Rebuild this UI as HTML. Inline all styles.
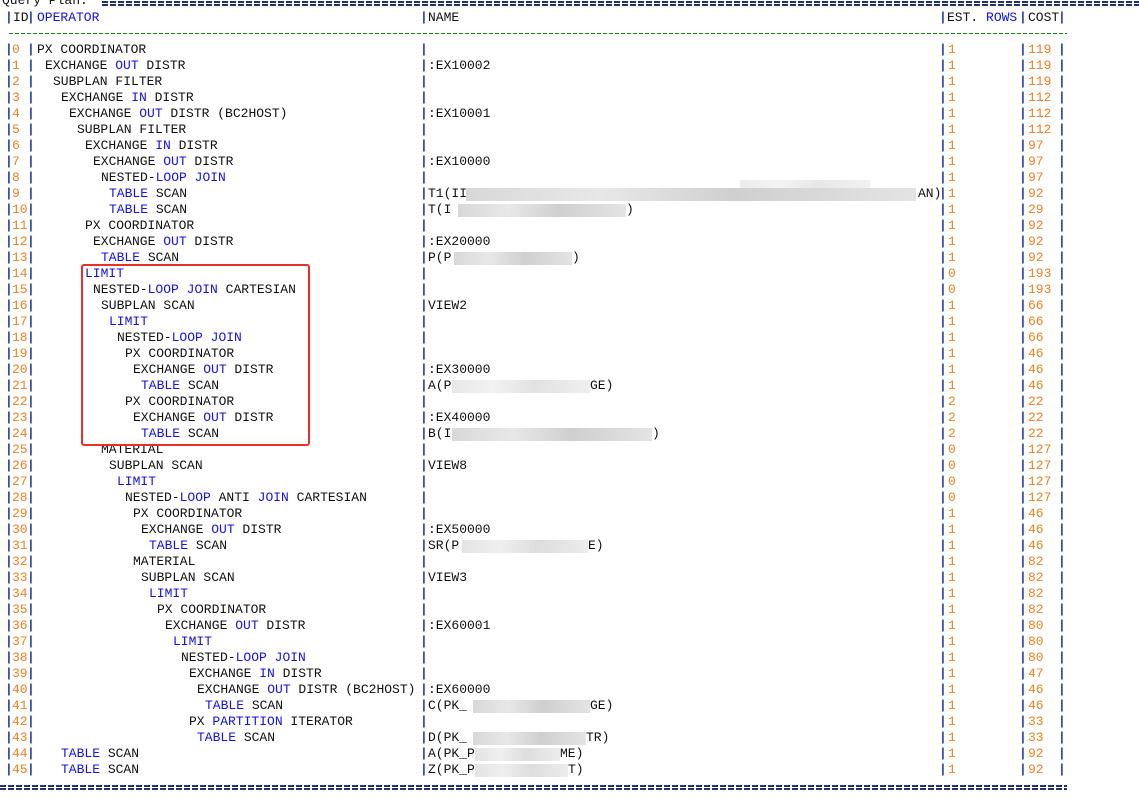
<!DOCTYPE html>
<html><head><meta charset="utf-8"><style>
body{margin:0;width:1139px;height:798px;background:#fff;position:relative;overflow:hidden;font-family:"Liberation Mono",monospace;font-size:13px;color:#111}
.r{position:absolute;left:0;width:1139px;height:16px;line-height:16px}
.r span{position:absolute;white-space:pre;top:0}
.b{color:#2848a8;font-weight:bold}
.o{color:#f08020}
.k{color:#1010f0}
.bl{position:absolute;height:13px;background:linear-gradient(90deg,#d8d8d8,#e8e8e8 30%,#cfcfcf 60%,#e4e4e4);}
.eq{position:absolute;height:5px;background:repeating-linear-gradient(90deg,#203070 0 6px,transparent 6px 8px);border:0}
.eq:after{content:"";position:absolute;left:0;right:0;top:2px;height:1px;background:#fff}
</style></head><body>
<div class="r" style="top:-7px"><span style="left:2px">Query Plan:</span></div>
<div class="eq" style="left:102px;top:1px;width:1037px"></div>
<div class="r" style="top:10px"><span class="b" style="left:5px">|</span><span style="left:13px">ID</span><span class="b" style="left:27px">|</span><span class="k" style="left:37px">OPERATOR</span><span class="b" style="left:420px">|</span><span style="left:428px">NAME</span><span class="b" style="left:939px">|</span><span style="left:947px">EST. <span class="k" style="position:static">ROWS</span></span><span class="b" style="left:1019px">|</span><span style="left:1028px">COST</span><span class="b" style="left:1058px">|</span></div>
<div style="position:absolute;left:9px;top:33px;width:1058px;height:1px;background:repeating-linear-gradient(90deg,#108a10 0 4px,transparent 4px 6px)"></div>

<div class="r" style="top:42px"><span class="b" style="left:5px">|</span><span class="o" style="left:12px">0</span><span class="b" style="left:27px">|</span><span style="left:37px">PX COORDINATOR</span><span class="b" style="left:420px">|</span><span class="b" style="left:939px">|</span><span class="o" style="left:948px">1</span><span class="b" style="left:1019px">|</span><span class="o" style="left:1028px">119</span><span class="b" style="left:1058px">|</span></div>
<div class="r" style="top:58px"><span class="b" style="left:5px">|</span><span class="o" style="left:12px">1</span><span class="b" style="left:27px">|</span><span style="left:45px">EXCHANGE <b class="k" style="font-weight:normal">OUT</b> DISTR</span><span class="b" style="left:420px">|</span><span style="left:428px">:EX10002</span><span class="b" style="left:939px">|</span><span class="o" style="left:948px">1</span><span class="b" style="left:1019px">|</span><span class="o" style="left:1028px">119</span><span class="b" style="left:1058px">|</span></div>
<div class="r" style="top:74px"><span class="b" style="left:5px">|</span><span class="o" style="left:12px">2</span><span class="b" style="left:27px">|</span><span style="left:53px">SUBPLAN FILTER</span><span class="b" style="left:420px">|</span><span class="b" style="left:939px">|</span><span class="o" style="left:948px">1</span><span class="b" style="left:1019px">|</span><span class="o" style="left:1028px">119</span><span class="b" style="left:1058px">|</span></div>
<div class="r" style="top:90px"><span class="b" style="left:5px">|</span><span class="o" style="left:12px">3</span><span class="b" style="left:27px">|</span><span style="left:61px">EXCHANGE <b class="k" style="font-weight:normal">IN</b> DISTR</span><span class="b" style="left:420px">|</span><span class="b" style="left:939px">|</span><span class="o" style="left:948px">1</span><span class="b" style="left:1019px">|</span><span class="o" style="left:1028px">112</span><span class="b" style="left:1058px">|</span></div>
<div class="r" style="top:106px"><span class="b" style="left:5px">|</span><span class="o" style="left:12px">4</span><span class="b" style="left:27px">|</span><span style="left:69px">EXCHANGE <b class="k" style="font-weight:normal">OUT</b> DISTR (BC2HOST)</span><span class="b" style="left:420px">|</span><span style="left:428px">:EX10001</span><span class="b" style="left:939px">|</span><span class="o" style="left:948px">1</span><span class="b" style="left:1019px">|</span><span class="o" style="left:1028px">112</span><span class="b" style="left:1058px">|</span></div>
<div class="r" style="top:122px"><span class="b" style="left:5px">|</span><span class="o" style="left:12px">5</span><span class="b" style="left:27px">|</span><span style="left:77px">SUBPLAN FILTER</span><span class="b" style="left:420px">|</span><span class="b" style="left:939px">|</span><span class="o" style="left:948px">1</span><span class="b" style="left:1019px">|</span><span class="o" style="left:1028px">112</span><span class="b" style="left:1058px">|</span></div>
<div class="r" style="top:138px"><span class="b" style="left:5px">|</span><span class="o" style="left:12px">6</span><span class="b" style="left:27px">|</span><span style="left:85px">EXCHANGE <b class="k" style="font-weight:normal">IN</b> DISTR</span><span class="b" style="left:420px">|</span><span class="b" style="left:939px">|</span><span class="o" style="left:948px">1</span><span class="b" style="left:1019px">|</span><span class="o" style="left:1028px">97</span><span class="b" style="left:1058px">|</span></div>
<div class="r" style="top:154px"><span class="b" style="left:5px">|</span><span class="o" style="left:12px">7</span><span class="b" style="left:27px">|</span><span style="left:93px">EXCHANGE <b class="k" style="font-weight:normal">OUT</b> DISTR</span><span class="b" style="left:420px">|</span><span style="left:428px">:EX10000</span><span class="b" style="left:939px">|</span><span class="o" style="left:948px">1</span><span class="b" style="left:1019px">|</span><span class="o" style="left:1028px">97</span><span class="b" style="left:1058px">|</span></div>
<div class="r" style="top:170px"><span class="b" style="left:5px">|</span><span class="o" style="left:12px">8</span><span class="b" style="left:27px">|</span><span style="left:101px">NESTED-<b class="k" style="font-weight:normal">LOOP</b> <b class="k" style="font-weight:normal">JOIN</b></span><span class="b" style="left:420px">|</span><span class="b" style="left:939px">|</span><span class="o" style="left:948px">1</span><span class="b" style="left:1019px">|</span><span class="o" style="left:1028px">97</span><span class="b" style="left:1058px">|</span></div>
<div class="r" style="top:186px"><span class="b" style="left:5px">|</span><span class="o" style="left:12px">9</span><span class="b" style="left:27px">|</span><span class="k" style="left:109px">TABLE <span style="position:static;color:#111">SCAN</span></span><span class="b" style="left:420px">|</span><span style="left:428px">T1(II</span><span style="left:918px">AN)</span><span class="b" style="left:939px">|</span><span class="o" style="left:948px">1</span><span class="b" style="left:1019px">|</span><span class="o" style="left:1028px">92</span><span class="b" style="left:1058px">|</span></div>
<div class="r" style="top:202px"><span class="b" style="left:5px">|</span><span class="o" style="left:12px">10</span><span class="b" style="left:27px">|</span><span class="k" style="left:109px">TABLE <span style="position:static;color:#111">SCAN</span></span><span class="b" style="left:420px">|</span><span style="left:428px">T(I</span><span style="left:626px">)</span><span class="b" style="left:939px">|</span><span class="o" style="left:948px">1</span><span class="b" style="left:1019px">|</span><span class="o" style="left:1028px">29</span><span class="b" style="left:1058px">|</span></div>
<div class="r" style="top:218px"><span class="b" style="left:5px">|</span><span class="o" style="left:12px">11</span><span class="b" style="left:27px">|</span><span style="left:85px">PX COORDINATOR</span><span class="b" style="left:420px">|</span><span class="b" style="left:939px">|</span><span class="o" style="left:948px">1</span><span class="b" style="left:1019px">|</span><span class="o" style="left:1028px">92</span><span class="b" style="left:1058px">|</span></div>
<div class="r" style="top:234px"><span class="b" style="left:5px">|</span><span class="o" style="left:12px">12</span><span class="b" style="left:27px">|</span><span style="left:93px">EXCHANGE <b class="k" style="font-weight:normal">OUT</b> DISTR</span><span class="b" style="left:420px">|</span><span style="left:428px">:EX20000</span><span class="b" style="left:939px">|</span><span class="o" style="left:948px">1</span><span class="b" style="left:1019px">|</span><span class="o" style="left:1028px">92</span><span class="b" style="left:1058px">|</span></div>
<div class="r" style="top:250px"><span class="b" style="left:5px">|</span><span class="o" style="left:12px">13</span><span class="b" style="left:27px">|</span><span class="k" style="left:101px">TABLE <span style="position:static;color:#111">SCAN</span></span><span class="b" style="left:420px">|</span><span style="left:428px">P(P</span><span style="left:572px">)</span><span class="b" style="left:939px">|</span><span class="o" style="left:948px">1</span><span class="b" style="left:1019px">|</span><span class="o" style="left:1028px">92</span><span class="b" style="left:1058px">|</span></div>
<div class="r" style="top:266px"><span class="b" style="left:5px">|</span><span class="o" style="left:12px">14</span><span class="b" style="left:27px">|</span><span class="k" style="left:85px">LIMIT</span><span class="b" style="left:420px">|</span><span class="b" style="left:939px">|</span><span class="o" style="left:948px">0</span><span class="b" style="left:1019px">|</span><span class="o" style="left:1028px">193</span><span class="b" style="left:1058px">|</span></div>
<div class="r" style="top:282px"><span class="b" style="left:5px">|</span><span class="o" style="left:12px">15</span><span class="b" style="left:27px">|</span><span style="left:93px">NESTED-<b class="k" style="font-weight:normal">LOOP</b> <b class="k" style="font-weight:normal">JOIN</b> CARTESIAN</span><span class="b" style="left:420px">|</span><span class="b" style="left:939px">|</span><span class="o" style="left:948px">0</span><span class="b" style="left:1019px">|</span><span class="o" style="left:1028px">193</span><span class="b" style="left:1058px">|</span></div>
<div class="r" style="top:298px"><span class="b" style="left:5px">|</span><span class="o" style="left:12px">16</span><span class="b" style="left:27px">|</span><span style="left:101px">SUBPLAN SCAN</span><span class="b" style="left:420px">|</span><span style="left:428px">VIEW2</span><span class="b" style="left:939px">|</span><span class="o" style="left:948px">1</span><span class="b" style="left:1019px">|</span><span class="o" style="left:1028px">66</span><span class="b" style="left:1058px">|</span></div>
<div class="r" style="top:314px"><span class="b" style="left:5px">|</span><span class="o" style="left:12px">17</span><span class="b" style="left:27px">|</span><span class="k" style="left:109px">LIMIT</span><span class="b" style="left:420px">|</span><span class="b" style="left:939px">|</span><span class="o" style="left:948px">1</span><span class="b" style="left:1019px">|</span><span class="o" style="left:1028px">66</span><span class="b" style="left:1058px">|</span></div>
<div class="r" style="top:330px"><span class="b" style="left:5px">|</span><span class="o" style="left:12px">18</span><span class="b" style="left:27px">|</span><span style="left:117px">NESTED-<b class="k" style="font-weight:normal">LOOP</b> <b class="k" style="font-weight:normal">JOIN</b></span><span class="b" style="left:420px">|</span><span class="b" style="left:939px">|</span><span class="o" style="left:948px">1</span><span class="b" style="left:1019px">|</span><span class="o" style="left:1028px">66</span><span class="b" style="left:1058px">|</span></div>
<div class="r" style="top:346px"><span class="b" style="left:5px">|</span><span class="o" style="left:12px">19</span><span class="b" style="left:27px">|</span><span style="left:125px">PX COORDINATOR</span><span class="b" style="left:420px">|</span><span class="b" style="left:939px">|</span><span class="o" style="left:948px">1</span><span class="b" style="left:1019px">|</span><span class="o" style="left:1028px">46</span><span class="b" style="left:1058px">|</span></div>
<div class="r" style="top:362px"><span class="b" style="left:5px">|</span><span class="o" style="left:12px">20</span><span class="b" style="left:27px">|</span><span style="left:133px">EXCHANGE <b class="k" style="font-weight:normal">OUT</b> DISTR</span><span class="b" style="left:420px">|</span><span style="left:428px">:EX30000</span><span class="b" style="left:939px">|</span><span class="o" style="left:948px">1</span><span class="b" style="left:1019px">|</span><span class="o" style="left:1028px">46</span><span class="b" style="left:1058px">|</span></div>
<div class="r" style="top:378px"><span class="b" style="left:5px">|</span><span class="o" style="left:12px">21</span><span class="b" style="left:27px">|</span><span class="k" style="left:141px">TABLE <span style="position:static;color:#111">SCAN</span></span><span class="b" style="left:420px">|</span><span style="left:428px">A(P</span><span style="left:590px">GE)</span><span class="b" style="left:939px">|</span><span class="o" style="left:948px">1</span><span class="b" style="left:1019px">|</span><span class="o" style="left:1028px">46</span><span class="b" style="left:1058px">|</span></div>
<div class="r" style="top:394px"><span class="b" style="left:5px">|</span><span class="o" style="left:12px">22</span><span class="b" style="left:27px">|</span><span style="left:125px">PX COORDINATOR</span><span class="b" style="left:420px">|</span><span class="b" style="left:939px">|</span><span class="o" style="left:948px">2</span><span class="b" style="left:1019px">|</span><span class="o" style="left:1028px">22</span><span class="b" style="left:1058px">|</span></div>
<div class="r" style="top:410px"><span class="b" style="left:5px">|</span><span class="o" style="left:12px">23</span><span class="b" style="left:27px">|</span><span style="left:133px">EXCHANGE <b class="k" style="font-weight:normal">OUT</b> DISTR</span><span class="b" style="left:420px">|</span><span style="left:428px">:EX40000</span><span class="b" style="left:939px">|</span><span class="o" style="left:948px">2</span><span class="b" style="left:1019px">|</span><span class="o" style="left:1028px">22</span><span class="b" style="left:1058px">|</span></div>
<div class="r" style="top:426px"><span class="b" style="left:5px">|</span><span class="o" style="left:12px">24</span><span class="b" style="left:27px">|</span><span class="k" style="left:141px">TABLE <span style="position:static;color:#111">SCAN</span></span><span class="b" style="left:420px">|</span><span style="left:428px">B(I</span><span style="left:652px">)</span><span class="b" style="left:939px">|</span><span class="o" style="left:948px">2</span><span class="b" style="left:1019px">|</span><span class="o" style="left:1028px">22</span><span class="b" style="left:1058px">|</span></div>
<div class="r" style="top:442px"><span class="b" style="left:5px">|</span><span class="o" style="left:12px">25</span><span class="b" style="left:27px">|</span><span style="left:101px">MATERIAL</span><span class="b" style="left:420px">|</span><span class="b" style="left:939px">|</span><span class="o" style="left:948px">0</span><span class="b" style="left:1019px">|</span><span class="o" style="left:1028px">127</span><span class="b" style="left:1058px">|</span></div>
<div class="r" style="top:458px"><span class="b" style="left:5px">|</span><span class="o" style="left:12px">26</span><span class="b" style="left:27px">|</span><span style="left:109px">SUBPLAN SCAN</span><span class="b" style="left:420px">|</span><span style="left:428px">VIEW8</span><span class="b" style="left:939px">|</span><span class="o" style="left:948px">0</span><span class="b" style="left:1019px">|</span><span class="o" style="left:1028px">127</span><span class="b" style="left:1058px">|</span></div>
<div class="r" style="top:474px"><span class="b" style="left:5px">|</span><span class="o" style="left:12px">27</span><span class="b" style="left:27px">|</span><span class="k" style="left:117px">LIMIT</span><span class="b" style="left:420px">|</span><span class="b" style="left:939px">|</span><span class="o" style="left:948px">0</span><span class="b" style="left:1019px">|</span><span class="o" style="left:1028px">127</span><span class="b" style="left:1058px">|</span></div>
<div class="r" style="top:490px"><span class="b" style="left:5px">|</span><span class="o" style="left:12px">28</span><span class="b" style="left:27px">|</span><span style="left:125px">NESTED-<b class="k" style="font-weight:normal">LOOP</b> ANTI <b class="k" style="font-weight:normal">JOIN</b> CARTESIAN</span><span class="b" style="left:420px">|</span><span class="b" style="left:939px">|</span><span class="o" style="left:948px">0</span><span class="b" style="left:1019px">|</span><span class="o" style="left:1028px">127</span><span class="b" style="left:1058px">|</span></div>
<div class="r" style="top:506px"><span class="b" style="left:5px">|</span><span class="o" style="left:12px">29</span><span class="b" style="left:27px">|</span><span style="left:133px">PX COORDINATOR</span><span class="b" style="left:420px">|</span><span class="b" style="left:939px">|</span><span class="o" style="left:948px">1</span><span class="b" style="left:1019px">|</span><span class="o" style="left:1028px">46</span><span class="b" style="left:1058px">|</span></div>
<div class="r" style="top:522px"><span class="b" style="left:5px">|</span><span class="o" style="left:12px">30</span><span class="b" style="left:27px">|</span><span style="left:141px">EXCHANGE <b class="k" style="font-weight:normal">OUT</b> DISTR</span><span class="b" style="left:420px">|</span><span style="left:428px">:EX50000</span><span class="b" style="left:939px">|</span><span class="o" style="left:948px">1</span><span class="b" style="left:1019px">|</span><span class="o" style="left:1028px">46</span><span class="b" style="left:1058px">|</span></div>
<div class="r" style="top:538px"><span class="b" style="left:5px">|</span><span class="o" style="left:12px">31</span><span class="b" style="left:27px">|</span><span class="k" style="left:149px">TABLE <span style="position:static;color:#111">SCAN</span></span><span class="b" style="left:420px">|</span><span style="left:428px">SR(P</span><span style="left:588px">E)</span><span class="b" style="left:939px">|</span><span class="o" style="left:948px">1</span><span class="b" style="left:1019px">|</span><span class="o" style="left:1028px">46</span><span class="b" style="left:1058px">|</span></div>
<div class="r" style="top:554px"><span class="b" style="left:5px">|</span><span class="o" style="left:12px">32</span><span class="b" style="left:27px">|</span><span style="left:133px">MATERIAL</span><span class="b" style="left:420px">|</span><span class="b" style="left:939px">|</span><span class="o" style="left:948px">1</span><span class="b" style="left:1019px">|</span><span class="o" style="left:1028px">82</span><span class="b" style="left:1058px">|</span></div>
<div class="r" style="top:570px"><span class="b" style="left:5px">|</span><span class="o" style="left:12px">33</span><span class="b" style="left:27px">|</span><span style="left:141px">SUBPLAN SCAN</span><span class="b" style="left:420px">|</span><span style="left:428px">VIEW3</span><span class="b" style="left:939px">|</span><span class="o" style="left:948px">1</span><span class="b" style="left:1019px">|</span><span class="o" style="left:1028px">82</span><span class="b" style="left:1058px">|</span></div>
<div class="r" style="top:586px"><span class="b" style="left:5px">|</span><span class="o" style="left:12px">34</span><span class="b" style="left:27px">|</span><span class="k" style="left:149px">LIMIT</span><span class="b" style="left:420px">|</span><span class="b" style="left:939px">|</span><span class="o" style="left:948px">1</span><span class="b" style="left:1019px">|</span><span class="o" style="left:1028px">82</span><span class="b" style="left:1058px">|</span></div>
<div class="r" style="top:602px"><span class="b" style="left:5px">|</span><span class="o" style="left:12px">35</span><span class="b" style="left:27px">|</span><span style="left:157px">PX COORDINATOR</span><span class="b" style="left:420px">|</span><span class="b" style="left:939px">|</span><span class="o" style="left:948px">1</span><span class="b" style="left:1019px">|</span><span class="o" style="left:1028px">82</span><span class="b" style="left:1058px">|</span></div>
<div class="r" style="top:618px"><span class="b" style="left:5px">|</span><span class="o" style="left:12px">36</span><span class="b" style="left:27px">|</span><span style="left:165px">EXCHANGE <b class="k" style="font-weight:normal">OUT</b> DISTR</span><span class="b" style="left:420px">|</span><span style="left:428px">:EX60001</span><span class="b" style="left:939px">|</span><span class="o" style="left:948px">1</span><span class="b" style="left:1019px">|</span><span class="o" style="left:1028px">80</span><span class="b" style="left:1058px">|</span></div>
<div class="r" style="top:634px"><span class="b" style="left:5px">|</span><span class="o" style="left:12px">37</span><span class="b" style="left:27px">|</span><span class="k" style="left:173px">LIMIT</span><span class="b" style="left:420px">|</span><span class="b" style="left:939px">|</span><span class="o" style="left:948px">1</span><span class="b" style="left:1019px">|</span><span class="o" style="left:1028px">80</span><span class="b" style="left:1058px">|</span></div>
<div class="r" style="top:650px"><span class="b" style="left:5px">|</span><span class="o" style="left:12px">38</span><span class="b" style="left:27px">|</span><span style="left:181px">NESTED-<b class="k" style="font-weight:normal">LOOP</b> <b class="k" style="font-weight:normal">JOIN</b></span><span class="b" style="left:420px">|</span><span class="b" style="left:939px">|</span><span class="o" style="left:948px">1</span><span class="b" style="left:1019px">|</span><span class="o" style="left:1028px">80</span><span class="b" style="left:1058px">|</span></div>
<div class="r" style="top:666px"><span class="b" style="left:5px">|</span><span class="o" style="left:12px">39</span><span class="b" style="left:27px">|</span><span style="left:189px">EXCHANGE <b class="k" style="font-weight:normal">IN</b> DISTR</span><span class="b" style="left:420px">|</span><span class="b" style="left:939px">|</span><span class="o" style="left:948px">1</span><span class="b" style="left:1019px">|</span><span class="o" style="left:1028px">47</span><span class="b" style="left:1058px">|</span></div>
<div class="r" style="top:682px"><span class="b" style="left:5px">|</span><span class="o" style="left:12px">40</span><span class="b" style="left:27px">|</span><span style="left:197px">EXCHANGE <b class="k" style="font-weight:normal">OUT</b> DISTR (BC2HOST)</span><span class="b" style="left:420px">|</span><span style="left:428px">:EX60000</span><span class="b" style="left:939px">|</span><span class="o" style="left:948px">1</span><span class="b" style="left:1019px">|</span><span class="o" style="left:1028px">46</span><span class="b" style="left:1058px">|</span></div>
<div class="r" style="top:698px"><span class="b" style="left:5px">|</span><span class="o" style="left:12px">41</span><span class="b" style="left:27px">|</span><span class="k" style="left:205px">TABLE <span style="position:static;color:#111">SCAN</span></span><span class="b" style="left:420px">|</span><span style="left:428px">C(PK_</span><span style="left:590px">GE)</span><span class="b" style="left:939px">|</span><span class="o" style="left:948px">1</span><span class="b" style="left:1019px">|</span><span class="o" style="left:1028px">46</span><span class="b" style="left:1058px">|</span></div>
<div class="r" style="top:714px"><span class="b" style="left:5px">|</span><span class="o" style="left:12px">42</span><span class="b" style="left:27px">|</span><span style="left:189px">PX <b class="k" style="font-weight:normal">PARTITION</b> ITERATOR</span><span class="b" style="left:420px">|</span><span class="b" style="left:939px">|</span><span class="o" style="left:948px">1</span><span class="b" style="left:1019px">|</span><span class="o" style="left:1028px">33</span><span class="b" style="left:1058px">|</span></div>
<div class="r" style="top:730px"><span class="b" style="left:5px">|</span><span class="o" style="left:12px">43</span><span class="b" style="left:27px">|</span><span class="k" style="left:197px">TABLE <span style="position:static;color:#111">SCAN</span></span><span class="b" style="left:420px">|</span><span style="left:428px">D(PK_</span><span style="left:586px">TR)</span><span class="b" style="left:939px">|</span><span class="o" style="left:948px">1</span><span class="b" style="left:1019px">|</span><span class="o" style="left:1028px">33</span><span class="b" style="left:1058px">|</span></div>
<div class="r" style="top:746px"><span class="b" style="left:5px">|</span><span class="o" style="left:12px">44</span><span class="b" style="left:27px">|</span><span class="k" style="left:61px">TABLE <span style="position:static;color:#111">SCAN</span></span><span class="b" style="left:420px">|</span><span style="left:428px">A(PK_P</span><span style="left:560px">ME)</span><span class="b" style="left:939px">|</span><span class="o" style="left:948px">1</span><span class="b" style="left:1019px">|</span><span class="o" style="left:1028px">92</span><span class="b" style="left:1058px">|</span></div>
<div class="r" style="top:762px"><span class="b" style="left:5px">|</span><span class="o" style="left:12px">45</span><span class="b" style="left:27px">|</span><span class="k" style="left:61px">TABLE <span style="position:static;color:#111">SCAN</span></span><span class="b" style="left:420px">|</span><span style="left:428px">Z(PK_P</span><span style="left:568px">T)</span><span class="b" style="left:939px">|</span><span class="o" style="left:948px">1</span><span class="b" style="left:1019px">|</span><span class="o" style="left:1028px">92</span><span class="b" style="left:1058px">|</span></div>

<div class="bl" style="left:466px;top:188px;width:450px"></div>
<div class="bl" style="left:740px;top:180px;width:130px;height:8px;opacity:.5"></div>
<div class="bl" style="left:458px;top:204px;width:168px"></div>
<div class="bl" style="left:454px;top:252px;width:118px"></div>
<div class="bl" style="left:452px;top:380px;width:138px;opacity:.6"></div>
<div class="bl" style="left:452px;top:428px;width:200px"></div>
<div class="bl" style="left:462px;top:540px;width:126px;opacity:.7"></div>
<div class="bl" style="left:473px;top:700px;width:117px"></div>
<div class="bl" style="left:473px;top:732px;width:113px"></div>
<div class="bl" style="left:475px;top:748px;width:85px;opacity:.7"></div>
<div class="bl" style="left:475px;top:764px;width:93px;opacity:.7"></div>

<div style="position:absolute;left:81px;top:264px;width:225px;height:178px;border:2px solid #e8302a;border-radius:3px"></div>
<div class="eq" style="left:0;top:785px;width:1067px"></div>
</body></html>
